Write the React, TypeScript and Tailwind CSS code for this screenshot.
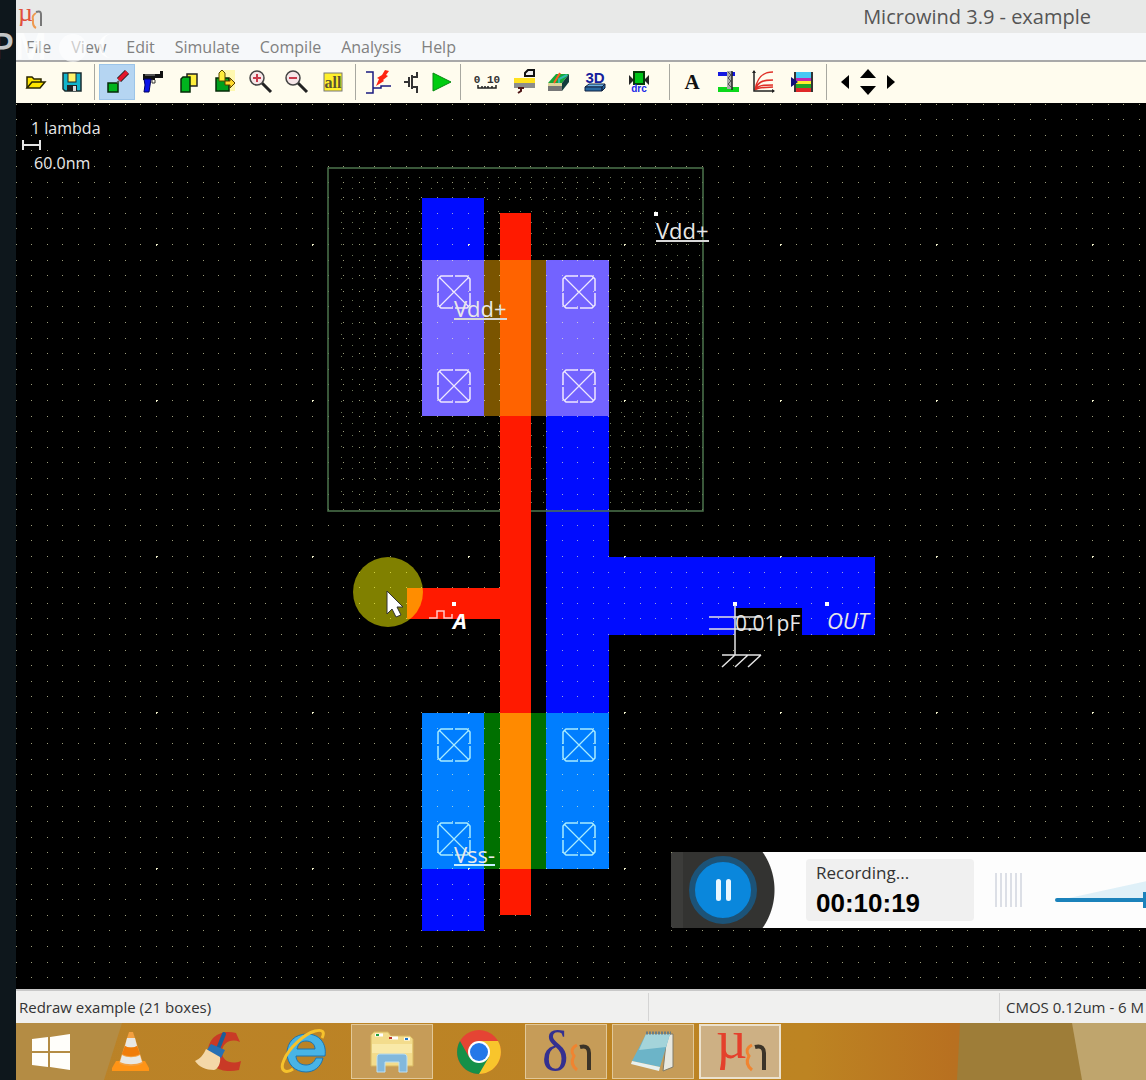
import React from 'react';

const UI = "font-['Open_Sans','Noto_Sans',sans-serif]";

function Icon({ children, size = 26 }: { children: React.ReactNode; size?: number }) {
  return (
    <svg width={size} height={size} viewBox={`0 0 ${size} ${size}`} aria-hidden="true">
      {children}
    </svg>
  );
}

const OpenIcon = (
  <Icon>
    <path d="M4 19V8h5l2 2h7v3" fill="#ffe600" stroke="#2a2600" strokeWidth="1.5" />
    <path d="M4 19l5-6h13l-5 6z" fill="#ffe600" stroke="#2a2600" strokeWidth="1.5" />
  </Icon>
);
const SaveIcon = (
  <Icon>
    <path d="M4 4h18v18H6l-2-2z" fill="#12b5cc" stroke="#1c2c30" strokeWidth="1.5" />
    <rect x="9" y="4" width="8" height="9" fill="#fff36b" stroke="#222" />
    <rect x="8" y="16" width="10" height="6" fill="#222" />
    <rect x="14" y="17" width="3" height="5" fill="#ddd" />
  </Icon>
);
const DrawIcon = (
  <Icon>
    <rect x="4" y="14" width="10" height="9" fill="#00b41e" stroke="#062a08" strokeWidth="1.5" />
    <path d="M13 14l2-2" stroke="#555" strokeWidth="2" />
    <path d="M15 11l8-8" stroke="#222" strokeWidth="6" />
    <path d="M15 11l8-8" stroke="#e2162c" strokeWidth="4" />
  </Icon>
);
const GunIcon = (
  <Icon>
    <path d="M3 5h17V2h3v7H15v2H3z" fill="#111" />
    <path d="M12 10v4h3v-3" fill="none" stroke="#333" />
    <path d="M4 10h7l-2 13H4l1-7z" fill="#0a12e8" stroke="#000060" />
    <path d="M5 6h10" stroke="#999" />
  </Icon>
);
const CopyIcon = (
  <Icon>
    <rect x="11" y="5" width="10" height="12" fill="#ffee3c" stroke="#222" strokeWidth="1.5" />
    <path d="M5 10l2-2h7v15H5z" fill="#00b41e" stroke="#062a08" strokeWidth="1.5" />
  </Icon>
);
const MoveIcon = (
  <Icon>
    <path d="M8 1h15v21h-6z" fill="#fff8b0" />
    <rect x="4" y="9" width="13" height="13" fill="#00a01c" stroke="#062a08" strokeWidth="1.5" />
    <path d="M7 12V4l3-3 3 3v8z" fill="#ffee3c" stroke="#5a4c00" />
    <path d="M13 12h5v-3l5 5-5 5v-3h-5z" fill="#ffd92c" stroke="#5a3c00" />
  </Icon>
);
const Zoom = ({ plus }: { plus?: boolean }) => (
  <Icon>
    <path d="M14 14l9 9" stroke="#222" strokeWidth="3" />
    <circle cx="9" cy="9" r="7" fill="#f6e6e8" stroke="#444" strokeWidth="1.5" />
    <path d={plus ? 'M5 9h8M9 5v8' : 'M5 9h8'} stroke="#c83a4c" strokeWidth="2" />
  </Icon>
);
const AllIcon = (
  <Icon>
    <rect x="4" y="4" width="18" height="18" fill="#fff02a" stroke="#777" />
    <text x="13" y="19" textAnchor="middle" fontFamily="Liberation Serif, serif" fontSize="16" fontWeight="bold" fill="#5a5430">all</text>
  </Icon>
);
const SimIcon = (
  <Icon>
    <path d="M1 3h7v21H1M8 19h8v-2h10" fill="none" stroke="#1a1a80" strokeWidth="1.5" />
    <path d="M20 1l4 1-3 4 2 1-5 4 1 1-8 5 3-7-2-1 5-3z" fill="#ff2410" />
  </Icon>
);
const MosIcon = (
  <Icon>
    <path d="M5 13h5M10 8v10M13 6v14M13 8h5V3M13 18h5v6" fill="none" stroke="#333" strokeWidth="2" />
  </Icon>
);
const RunIcon = (
  <Icon>
    <path d="M4 4l18 9-18 9z" fill="#00cc10" stroke="#078a10" />
  </Icon>
);
const RulerIcon = (
  <Icon>
    <text x="13" y="14" textAnchor="middle" fontFamily="Liberation Mono, monospace" fontSize="11" fontWeight="bold" fill="#333">0 10</text>
    <path d="M4 16v3h18v-3M8 17v2M11 17v2M14 17v2M18 17v2" fill="none" stroke="#222" strokeWidth="1.5" />
  </Icon>
);
const SectionIcon = (
  <Icon>
    <path d="M2 9h21v5H2z" fill="#ffe11e" />
    <path d="M2 14h21v5H2z" fill="#8c8c8c" />
    <path d="M13 7V4l3-3h6v6z" fill="#eee" stroke="#111" strokeWidth="2" />
    <path d="M6 19h6M9 18v4l-3 2" stroke="#501818" strokeWidth="2" fill="none" />
  </Icon>
);
const ProcessIcon = (
  <Icon>
    <path d="M2 14l8-9h13l-7 9z" fill="#18a838" />
    <path d="M2 14h14v4H2z" fill="#ddd59a" />
    <path d="M2 17h14v5H2z" fill="#777" />
    <path d="M16 14l7-9v8l-7 9z" fill="#123c3c" />
    <path d="M8 14l6-10" stroke="#ff5a20" strokeWidth="2" />
    <path d="M13 14v-4l8-4" stroke="#30b8b0" strokeWidth="2" fill="none" />
  </Icon>
);
const ThreeDIcon = (
  <Icon>
    <text x="13" y="14" textAnchor="middle" fontFamily="Liberation Sans, sans-serif" fontSize="15" fontWeight="bold" fill="#14209c">3D</text>
    <path d="M3 18l4-3h16l-3 3z" fill="#68b0e0" stroke="#102040" />
    <path d="M3 18h17v4H3zM20 18l3-3v4l-3 3z" fill="#2868a0" stroke="#102040" />
  </Icon>
);
const DrcIcon = (
  <Icon>
    <path d="M3 6l5 5-5 5zM23 6l-5 5 5 5z" fill="#252525" />
    <rect x="8" y="3" width="10" height="12" fill="#00c418" stroke="#063a08" strokeWidth="2" />
    <text x="13" y="23" textAnchor="middle" fontFamily="Liberation Sans, sans-serif" fontSize="10" fontWeight="bold" fill="#1828e8">drc</text>
  </Icon>
);
const TextIcon = (
  <Icon>
    <text x="13" y="20" textAnchor="middle" fontFamily="Liberation Serif, serif" fontSize="21" fontWeight="bold" fill="#111">A</text>
  </Icon>
);
const ViaIcon = (
  <Icon>
    <rect x="3" y="3" width="17" height="4" fill="#1418e0" />
    <rect x="3" y="18" width="21" height="5" fill="#0cd81c" />
    <rect x="12" y="2" width="5" height="18" fill="#aaa" />
    <path d="M13 3l3 3-3 3 3 3-3 3 3 3" fill="none" stroke="#555" />
    <path d="M17 2v19" stroke="#222" strokeWidth="1.5" />
  </Icon>
);
const CurvesIcon = (
  <Icon>
    <path d="M4 21c2-12 7-18 18-18M4 21c3-8 7-10 18-10M4 21c3-5 8-5 18-5M4 21c4-3 8-2 18-3" fill="none" stroke="#e03028" strokeWidth="1.5" />
    <path d="M3 2v20h20" fill="none" stroke="#222" strokeWidth="1.5" />
    <path d="M1 4h4L3 1zM21 20v4l3-2z" fill="#222" />
  </Icon>
);
const PaletteIcon = (
  <Icon>
    <rect x="5" y="3" width="19" height="20" fill="#333" />
    <rect x="7" y="3" width="15" height="6" fill="#46c8f4" />
    <rect x="7" y="9" width="15" height="3" fill="#c028b0" />
    <rect x="7" y="12" width="15" height="3" fill="#ffee30" />
    <rect x="7" y="15" width="15" height="4" fill="#20a428" />
    <rect x="7" y="19" width="15" height="4" fill="#e02828" />
    <path d="M2 8l7 5-7 5z" fill="#10107c" />
  </Icon>
);

function Tool({ label, children, w = 'w-9', active }: { label: string; children: React.ReactNode; w?: string; active?: boolean }) {
  return (
    <button
      type="button"
      aria-label={label}
      aria-pressed={active}
      className={`flex h-9 shrink-0 items-center justify-center ${w} ${active ? 'border border-[#9cc4e8] bg-[#b5d5f2]' : ''}`}
    >
      {children}
    </button>
  );
}

const Separator = () => <span className="mx-1 h-9 w-px shrink-0 bg-[#a8a8a0]" />;

function Toolbar() {
  return (
    <div className="flex h-[43px] shrink-0 items-center overflow-hidden border-t-2 border-[#a9a9a9] bg-[#fffcee] pb-[2px] pl-[2px]">
      <Tool label="Open">{OpenIcon}</Tool>
      <Tool label="Save">{SaveIcon}</Tool>
      <Separator />
      <Tool label="Draw box" active>{DrawIcon}</Tool>
      <Tool label="Delete">{GunIcon}</Tool>
      <Tool label="Copy">{CopyIcon}</Tool>
      <Tool label="Move">{MoveIcon}</Tool>
      <Tool label="Zoom in"><Zoom plus /></Tool>
      <Tool label="Zoom out"><Zoom /></Tool>
      <Tool label="View all">{AllIcon}</Tool>
      <Separator />
      <Tool label="Simulate">{SimIcon}</Tool>
      <Tool label="MOS device" w="w-8">{MosIcon}</Tool>
      <Tool label="Run simulation" w="w-7">{RunIcon}</Tool>
      <Separator />
      <Tool label="Measure" w="w-11">{RulerIcon}</Tool>
      <Tool label="Cross-section" w="w-8">{SectionIcon}</Tool>
      <Tool label="Process steps">{ProcessIcon}</Tool>
      <Tool label="3D view">{ThreeDIcon}</Tool>
      <Tool label="Design rule check" w="w-[52px]">{DrcIcon}</Tool>
      <Separator />
      <Tool label="Add text">{TextIcon}</Tool>
      <Tool label="Add via">{ViaIcon}</Tool>
      <Tool label="MOS characteristics">{CurvesIcon}</Tool>
      <Tool label="Palette" w="w-10">{PaletteIcon}</Tool>
      <Separator />
      <button type="button" aria-label="Scroll left" className="ml-1 flex h-9 w-5 items-center justify-center">
        <svg width="8" height="14" aria-hidden="true"><path d="M8 0v14L0 7z" /></svg>
      </button>
      <span className="mx-[3px] flex flex-col gap-2">
        <button type="button" aria-label="Scroll up" className="flex w-5 justify-center">
          <svg width="16" height="9" aria-hidden="true"><path d="M0 9h16L8 0z" /></svg>
        </button>
        <button type="button" aria-label="Scroll down" className="flex w-5 justify-center">
          <svg width="16" height="9" aria-hidden="true"><path d="M0 0h16L8 9z" /></svg>
        </button>
      </span>
      <button type="button" aria-label="Scroll right" className="flex h-9 w-5 items-center justify-center">
        <svg width="8" height="14" aria-hidden="true"><path d="M0 0v14l8-7z" /></svg>
      </button>
    </div>
  );
}

const steps = Array.from({ length: 10 }, (_, i) => Math.round(i * 15.6));
const gridDots = steps.flatMap((x) => steps.map((y) => `M${x} ${y}h1v1h-1z`)).join('');
const wellSteps = Array.from({ length: 33 }, (_, i) => Math.round(i * 11.2));
const wellDots = wellSteps
  .flatMap((x) => wellSteps.slice(0, 30).map((y) => `M${x + 341} ${y + 177}h1v1h-1z`))
  .join('');

function Contact({ x, y, color }: { x: number; y: number; color: string }) {
  return (
    <g transform={`translate(${x} ${y})`} fill="none" stroke={color} strokeWidth="1.5">
      <path d="M15 0H3L0 3v12M17 0h12l3 3v12M32 17v12l-3 3H17M15 32H3l-3-3V17" />
      <path d="M1 1l30 30M31 1L1 31" strokeWidth="1.2" />
    </g>
  );
}

function Layout() {
  return (
    <svg className="absolute inset-0 h-full w-full" aria-label="CMOS inverter layout">
      <defs>
        <pattern id="grid" x="0" y="88" width="156" height="156" patternUnits="userSpaceOnUse">
          <path d={gridDots} fill="#ffffc8" opacity="0.62" />
          <path d="M0 0h2v1h-1v1h-1z" fill="#ffffd8" opacity="0.9" />
        </pattern>
      </defs>
      <g transform="translate(-16 -103)">
        <path d={wellDots} fill="#9cac80" opacity="0.7" />
        <g fill="#000cff">
          <rect x="422" y="198" width="62" height="62" />
          <rect x="546" y="416" width="63" height="297" />
          <rect x="609" y="557" width="266" height="78" />
          <rect x="422" y="869" width="62" height="62" />
        </g>
        <rect x="422" y="260" width="187" height="156" fill="#7363ff" />
        <rect x="484" y="260" width="62" height="156" fill="#7a5400" />
        <rect x="422" y="713" width="187" height="156" fill="#007eff" />
        <rect x="484" y="713" width="62" height="156" fill="#007000" />
        <rect x="735" y="608" width="67" height="28" fill="#000" />
        <rect x="16" y="103" width="100%" height="100%" fill="url(#grid)" />
        <rect x="328" y="168" width="375" height="343" fill="none" stroke="#4c744c" strokeWidth="1.5" />
        <rect x="500" y="213" width="31" height="702" fill="#ff1a00" />
        <rect x="407" y="588" width="94" height="31" fill="#ff1a00" />
        <rect x="500" y="260" width="31" height="156" fill="#ff6300" />
        <rect x="500" y="713" width="31" height="156" fill="#ff8a00" />
        {[276, 370].map((y) => [438, 563].map((x) => <Contact key={`${x}-${y}`} x={x} y={y} color="#efe8ff" />))}
        {[729, 823].map((y) => [438, 563].map((x) => <Contact key={`${x}-${y}`} x={x} y={y} color="#a8ecff" />))}
        <g fill="#fff">
          <rect x="654" y="212" width="4" height="4" />
          <rect x="452" y="602" width="4" height="4" />
          <rect x="733" y="602" width="4" height="4" />
          <rect x="825" y="602" width="4" height="4" />
        </g>
        <g fill="none" stroke="#e4e4e4" strokeWidth="1.5">
          <path d="M735 605v50M709 617h52M709 629h52M722 655h39M735 655l-13 12M748 655l-13 12M761 655l-13 12" />
          <path d="M429 618h8v-7h7v7h8v-4" stroke="#ffc8c8" />
          <path d="M23 145h17M23 140v10M40 140v10" strokeWidth="2" />
        </g>
        <circle cx="388" cy="592" r="35" fill="#ffff00" opacity="0.5" />
        <path d="M387 591v23l5-5 4 8 5-2-4-8h6z" fill="#fff" stroke="#333" />
      </g>
    </svg>
  );
}

function Recorder() {
  return (
    <section aria-label="Recorder" className="absolute right-0 bottom-[61px] left-[655px] flex h-[76px] items-center overflow-hidden rounded-l bg-[#fdfdfd]">
      <div className="relative flex h-full w-[104px] shrink-0 items-center justify-center bg-[radial-gradient(circle_at_37px_38px,#333331_66px,#fdfdfd_67px)]">
        <span className="absolute inset-y-0 left-0 w-3 bg-[#3c3c3a]" />
        <button type="button" aria-label="Pause" className="flex size-[68px] items-center justify-center gap-[5px] rounded-full border-[6px] border-[#1c5378] bg-[#0a87dc]">
          <span className="h-[22px] w-[5px] rounded-sm bg-[#e8f6ff]" />
          <span className="h-[22px] w-[5px] rounded-sm bg-[#e8f6ff]" />
        </button>
      </div>
      <div className="ml-[31px] flex h-[62px] w-[168px] shrink-0 flex-col justify-center rounded bg-[#f0f0f0] pb-[2px] pl-[10px]">
        <span className="text-[17px] leading-7 text-[#333]">Recording...</span>
        <span className="font-['Liberation_Sans',sans-serif] text-[26px] leading-8 font-bold text-black">00:10:19</span>
      </div>
      <div className="ml-[21px] flex shrink-0 gap-[3px]">
        {[0, 1, 2, 3, 4, 5].map((i) => (
          <span key={i} className="h-[34px] w-[2px] bg-[#dcdfe6]" />
        ))}
      </div>
      <div className="ml-[33px] w-[180px] shrink-0">
        <svg className="block h-5 w-[180px]" aria-hidden="true"><path d="M14 20L180 -16v36z" fill="#dff0f8" /></svg>
        <input
          type="range"
          aria-label="Volume"
          defaultValue={50}
          className="block h-1 w-[180px] appearance-none rounded bg-[#1b82bb] [&::-webkit-slider-thumb]:h-4 [&::-webkit-slider-thumb]:w-1 [&::-webkit-slider-thumb]:appearance-none [&::-webkit-slider-thumb]:bg-[#1b82bb]"
        />
      </div>
    </section>
  );
}

function Canvas() {
  return (
    <main className="relative min-h-[600px] flex-1 overflow-hidden bg-black text-[#e8e8e8]">
      <Layout />
      <span className="absolute top-[15px] left-[15px] text-[16px] leading-5">1 lambda</span>
      <span className="absolute top-[50px] left-[18px] text-[16px] leading-5">60.0nm</span>
      <span className="absolute top-[117px] left-[640px] border-b-2 border-[#d8d8d8] text-[22px] leading-5">Vdd+</span>
      <span className="absolute top-[195px] left-[438px] border-b-2 border-[#d8d8d8] text-[22px] leading-5">Vdd+</span>
      <span className="absolute top-[741px] left-[438px] border-b-2 border-[#c8f0ff] text-[22px] leading-5">Vss-</span>
      <span className="absolute top-[507px] left-[437px] text-[22px] leading-5 font-bold text-white italic">A</span>
      <span className="absolute top-[510px] left-[719px] text-[21px] leading-5">0.01pF</span>
      <span className="absolute top-[507px] left-[811px] text-[22px] leading-5 italic">OUT</span>
      <Recorder />
    </main>
  );
}

const EtaMark = ({ x }: { x: number }) => (
  <g fill="none" transform={`translate(${x} 0)`}>
    <path d="M5 18c-6 3-6 7-3 11-3 5-2 10 3 14" stroke="#f08430" strokeWidth="3" />
    <path d="M8 20c7-2 9 2 9 6v17" stroke="#3c3428" strokeWidth="4" />
  </g>
);

function Task({ label, open, active, children }: { label: string; open?: boolean; active?: boolean; children: React.ReactNode }) {
  const frame = active
    ? 'border-2 border-[#ece2ce] bg-[#cdb084]'
    : open
      ? 'border border-[#e2c898] bg-[#c69c58]'
      : '';
  return (
    <button type="button" aria-label={label} className={`flex h-[55px] w-[82px] shrink-0 items-center justify-center ${frame}`}>
      <svg className="overflow-visible" width="54" height="50" viewBox="0 0 54 50" aria-hidden="true">{children}</svg>
    </button>
  );
}

function Taskbar() {
  return (
    <nav aria-label="Taskbar" className="relative flex h-[57px] shrink-0 items-center gap-[5px] overflow-hidden bg-[linear-gradient(to_right,#ba8228,#bd8422_70%,#b87020_83%)]">
      <svg className="absolute inset-0 h-full w-full" aria-hidden="true">
        <path d="M0 0h106L88 57H0z" fill="#b48c44" />
        <path d="M944 0h300v57H941z" fill="#9e7d38" />
        <path d="M1056 0h200v57h-190z" fill="#bfa56d" />
      </svg>
      <div className="relative flex items-center gap-[5px]">
        <button type="button" aria-label="Start" className="flex h-[55px] w-[69px] items-center justify-center">
          <svg width="40" height="38" aria-hidden="true">
            <path d="M1 6l16-2v14H1zM19 4l20-3v17H19zM1 20h16v14L1 32zM19 20h20v17l-20-3z" fill="#fffefa" />
          </svg>
        </button>
        <Task label="VLC media player">
          <path d="M12 34h29l4 7v3H8v-3z" fill="#ff9416" />
          <path d="M25 5h4l10 31c-4 4-20 4-24 0z" fill="#f4a040" />
          <path d="M23 11h8l2 8c-3 2-9 2-12 0z" fill="#e8e8e4" />
          <path d="M21 19c4 2 8 2 12 0l3 8c-6 3-12 3-18 0z" fill="#f07c08" />
          <path d="M18 28c5 3 13 3 18 0l2 7c-6 3-16 3-22 0z" fill="#e8e8e4" />
        </Task>
        <Task label="CCleaner">
          <path d="M45 6l4 9c-9-4-18 1-18 10s9 13 19 9l-2 9c-17 4-31-3-31-18S30 2 45 6z" fill="#c93a26" />
          <path d="M33 7l-6 15" stroke="#1c5e98" strokeWidth="4" strokeLinecap="round" />
          <path d="M20 17l14 6-4 8-14-8z" fill="#2670b4" />
          <path d="M15 22l14 8c1 6-2 12-6 13C15 43 8 40 4 34c5-2 9-7 11-12z" fill="#f4d8a8" />
        </Task>
        <Task label="Internet Explorer">
          <path d="M38 31c-2 5-6 7-10 7-6 0-10-4-10-9h29c2-13-6-22-18-22S9 15 9 26s8 19 19 19c8 0 15-5 17-14zM19 22c1-5 4-8 9-8s9 3 9 8z" fill="#48b4e6" stroke="#1c74b0" />
          <path d="M15 42C8 47 1 44 6 33 11 21 26 7 37 4c8-2 10 1 7 7" fill="none" stroke="#f6c22c" strokeWidth="3" />
        </Task>
        <Task label="File Explorer" open>
          <path d="M6 8l3-3h14l3 4h19l3 3v27H6z" fill="#f3dc8c" stroke="#d8b860" />
          <path d="M10 8h8M25 11h8M39 12h6" stroke="#fff" strokeWidth="3" />
          <path d="M11 7h3v2h-3z" fill="#20a040" />
          <path d="M24 10h3v2h-3z" fill="#c03828" />
          <path d="M40 11h3v2h-3z" fill="#2078c8" />
          <path d="M7 17h40v9H7z" fill="#f9e9a8" />
          <path d="M12 45V31c0-3 1-4 3-4h23c3 0 4 1 4 4v14h-8V35H20v10z" fill="#82b8dc" stroke="#bee0f2" />
        </Task>
        <Task label="Google Chrome">
          <circle cx="27" cy="25" r="22" fill="#e54434" />
          <path d="M27 25L27 47A22 22 0 0 0 46 14H27z" fill="#f8c52c" />
          <path d="M17 30L8 14A22 22 0 0 0 27 47l10-17z" fill="#159048" />
          <circle cx="27" cy="25" r="11" fill="#fff" />
          <circle cx="27" cy="25" r="9" fill="#2478e8" />
        </Task>
        <Task label="Delta editor" open>
          <text x="3" y="43" fontFamily="Liberation Serif, serif" fontSize="56" fill="#343090">δ</text>
          <EtaMark x={33} />
        </Task>
        <Task label="Notepad" open>
          <path d="M41 7h6v33l-10 4z" fill="#e8e8df" stroke="#827c68" />
          <path d="M20 7h24L34 40 6 34z" fill="#6cb4c8" />
          <path d="M20 7h24l-4 13-27 3z" fill="#a4d4da" />
          <path d="M6 34l28 6-1 4L5 37z" fill="#e8f0ee" />
          <path d="M20 6h25" stroke="#6c7c80" strokeWidth="3" strokeDasharray="2 1" />
        </Task>
        <Task label="Microwind" open active>
          <text x="3" y="31" fontFamily="Liberation Serif, serif" fontSize="54" fill="#e4402c">µ</text>
          <EtaMark x={34} />
        </Task>
      </div>
    </nav>
  );
}

const menus = ['File', 'View', 'Edit', 'Simulate', 'Compile', 'Analysis', 'Help'];

export default function App() {
  return (
    <div className={`relative flex min-h-screen overflow-hidden bg-[#0e171c] ${UI}`}>
      <div className="w-4 shrink-0" />
      <div className="flex min-w-0 flex-1 flex-col">
        <header className="flex h-[33px] shrink-0 items-center bg-[#e8e9e8] pr-[55px] pl-[2px]">
          <svg className="overflow-visible" width="26" height="26" aria-hidden="true">
            <text x="0" y="17" fontFamily="Liberation Serif, serif" fontSize="26" fill="#e0503c">µ</text>
            <path d="M18 9c-5 3-3 5-3 7s-1 6 3 8" fill="none" stroke="#ee9a50" strokeWidth="2" />
            <path d="M18 8c6-2 5 2 5 6v8" fill="none" stroke="#777" strokeWidth="2" />
          </svg>
          <h1 className="ml-auto text-[20px] leading-7 whitespace-nowrap text-[#555]">Microwind 3.9 - example</h1>
        </header>
        <div role="menubar" className="flex h-[27px] shrink-0 items-center gap-5 bg-[#f6f8fa] pl-[10px] text-[16px] leading-5 text-[#808080]">
          {menus.map((m) => (
            <button key={m} type="button" role="menuitem">{m}</button>
          ))}
        </div>
        <Toolbar />
        <Canvas />
        <footer className="flex h-[34px] shrink-0 items-center border-t-2 border-[#c8c8c8] bg-[#f0f0ef] text-[15px] leading-5 whitespace-nowrap text-[#333]">
          <span className="flex-[632] pl-[3px]">Redraw example (21 boxes)</span>
          <span className="h-7 flex-[352] border-l border-[#d4d4d4]" />
          <span className="flex h-7 w-[147px] items-center overflow-hidden border-l border-[#d4d4d4] pl-[6px]">CMOS 0.12um - 6 M</span>
        </footer>
        <Taskbar />
      </div>
      <div aria-hidden="true" className="pointer-events-none absolute top-[28px] left-[-8px] flex items-center gap-3 text-[36px] leading-9 font-semibold text-white/75">
        <span>PM</span>
        <span className="mt-1 size-7 rounded-full bg-white/60" />
        <span className="h-6 w-3 rounded-l-full border-l-4 border-white/80" />
      </div>
    </div>
  );
}
